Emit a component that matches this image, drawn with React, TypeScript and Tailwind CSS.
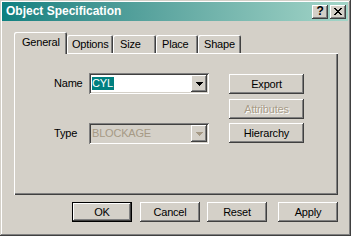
import React from "react";

// classic 3D bevels
const RAISED =
  "shadow-[inset_-1px_-1px_0_#404040,inset_1px_1px_0_#ffffff,inset_-2px_-2px_0_#808080,inset_2px_2px_0_#d4d0c8]";
const DEFAULT_BTN =
  "shadow-[inset_0_0_0_1px_#000000,inset_-2px_-2px_0_#404040,inset_2px_2px_0_#ffffff,inset_-3px_-3px_0_#808080,inset_3px_3px_0_#d4d0c8]";
const SUNKEN =
  "shadow-[inset_1px_1px_0_#808080,inset_-1px_-1px_0_#ffffff,inset_2px_2px_0_#404040,inset_-2px_-2px_0_#d4d0c8]";

const TABS = [
  { label: "General", width: "w-[53px]", pad: "pl-[8px]" },
  { label: "Options", width: "w-[46px]", pad: "pl-[5px]" },
  { label: "Size", width: "w-[43px]", pad: "pl-[7px]" },
  { label: "Place", width: "w-[42px]", pad: "pl-[6px]" },
  { label: "Shape", width: "w-[43px]", pad: "pl-[6px]" },
];

function Arrow({ color }: { color: string }) {
  return (
    <svg width="7" height="4" viewBox="0 0 7 4" shapeRendering="crispEdges">
      <path d="M0 0h7v1H0zM1 1h5v1H1zM2 2h3v1H2zM3 3h1v1H3z" fill={color} />
    </svg>
  );
}

function Combo({ value, disabled }: { value: string; disabled?: boolean }) {
  return (
    <div
      className={`w-[120px] h-[21px] p-[2px] flex ${SUNKEN} ${
        disabled ? "bg-[#d4d0c8]" : "bg-white"
      }`}
    >
      <div className="flex-1 flex items-center pl-[1px]">
        {disabled ? (
          <span className="text-[#a69a86]">{value}</span>
        ) : (
          <span className="inline-block h-[13px] leading-[13px] pr-[1px] bg-[#008080] text-white">{value}</span>
        )}
      </div>
      <div className={`w-[16px] h-[17px] flex items-center justify-center bg-[#d4d0c8] ${RAISED}`}>
        <Arrow color={disabled ? "#a69a86" : "#000000"} />
      </div>
    </div>
  );
}

function Button({
  label,
  className = "",
  disabled,
  isDefault,
}: {
  label: string;
  className?: string;
  disabled?: boolean;
  isDefault?: boolean;
}) {
  return (
    <div
      className={`h-[20px] flex items-center justify-center ${isDefault ? DEFAULT_BTN : RAISED} ${className}`}
    >
      <span className={disabled ? "text-[#a89c88] [text-shadow:1px_1px_0_#ffffff]" : ""}>{label}</span>
    </div>
  );
}

export default function App() {
  return (
    <div
      className={`w-[351px] h-[236px] bg-[#d4d0c8] pl-[2px] pt-[2px] pr-[3px] font-['Liberation_Sans',Arial,sans-serif] text-[11px] leading-[13px] tracking-[-0.2px] text-black shadow-[inset_-1px_-1px_0_#404040,inset_1px_1px_0_#d4d0c8,inset_-2px_-2px_0_#808080,inset_2px_2px_0_#ffffff]`}
    >
      {/* Title bar */}
      <div className="h-[19px] flex items-center bg-linear-to-r from-[#0a8080] to-[#a3d5c8]">
        <span className="pl-[4px] text-white font-bold text-[12px] tracking-normal">
          Object Specification
        </span>
        <div className="ml-auto flex gap-[2px] pr-[2px]">
          <div className={`w-[16px] h-[14px] bg-[#d4d0c8] flex items-center justify-center font-bold text-[12px] ${RAISED}`}>
            ?
          </div>
          <div className={`w-[16px] h-[14px] bg-[#d4d0c8] flex items-center justify-center ${RAISED}`}>
            <svg width="8" height="7" viewBox="0 0 8 7" shapeRendering="crispEdges">
              <path
                d="M0 0h2v1H0zM6 0h2v1H6zM1 1h2v1H1zM5 1h2v1H5zM2 2h4v1H2zM3 3h2v1H3zM2 4h4v1H2zM1 5h2v1H1zM5 5h2v1H5zM0 6h2v1H0zM6 6h2v1H6z"
                fill="#000000"
              />
            </svg>
          </div>
        </div>
      </div>

      <div className="pl-[12px] pt-[11px]">
        {/* Tabs */}
        <div className="h-[21px] flex items-end">
          {TABS.map((t, i) =>
            i === 0 ? (
              <div
                key={t.label}
                className={`relative z-10 h-[22px] -mb-[1px] pt-[4px] bg-[#d4d0c8] rounded-tl-[2px] rounded-tr-[2px] ${t.width} ${t.pad} shadow-[inset_1px_1px_0_#ffffff,inset_-1px_0_0_#404040,inset_-2px_0_0_#808080]`}
              >
                {t.label}
              </div>
            ) : (
              <div
                key={t.label}
                className={`h-[18px] pt-[3px] rounded-tl-[2px] rounded-tr-[2px] ${t.width} ${t.pad} shadow-[inset_1px_1px_0_#ffffff,inset_-1px_0_0_#404040,inset_-2px_0_0_#808080]`}
              >
                {t.label}
              </div>
            )
          )}
        </div>

        {/* Tab panel */}
        <div className="w-[324px] h-[142px] pt-[20px] pl-[40px] shadow-[inset_1px_1px_0_#ffffff,inset_-1px_-1px_0_#404040,inset_-2px_-2px_0_#808080]">
          <div className="flex">
            <div className="w-[155px]">
              <div className="flex h-[21px]">
                <span className="w-[35px] pt-[4px]">Name</span>
                <Combo value="CYL" />
              </div>
              <div className="h-[29px]" />
              <div className="flex h-[21px]">
                <span className="w-[35px] pt-[4px]">Type</span>
                <Combo value="BLOCKAGE" disabled />
              </div>
            </div>
            <div className="ml-[20px] pt-[1px] flex flex-col">
              <Button label="Export" className="w-[75px]" />
              <Button label="Attributes" className="w-[75px] mt-[5px]" disabled />
              <Button label="Hierarchy" className="w-[75px] mt-[4px]" />
            </div>
          </div>
        </div>

        {/* Dialog buttons */}
        <div className="flex mt-[7px] pl-[58px]">
          <Button label="OK" className="w-[60px]" isDefault />
          <Button label="Cancel" className="w-[60px] ml-[8px]" />
          <Button label="Reset" className="w-[60px] ml-[7px]" />
          <Button label="Apply" className="w-[60px] ml-[11px]" />
        </div>
      </div>
    </div>
  );
}
